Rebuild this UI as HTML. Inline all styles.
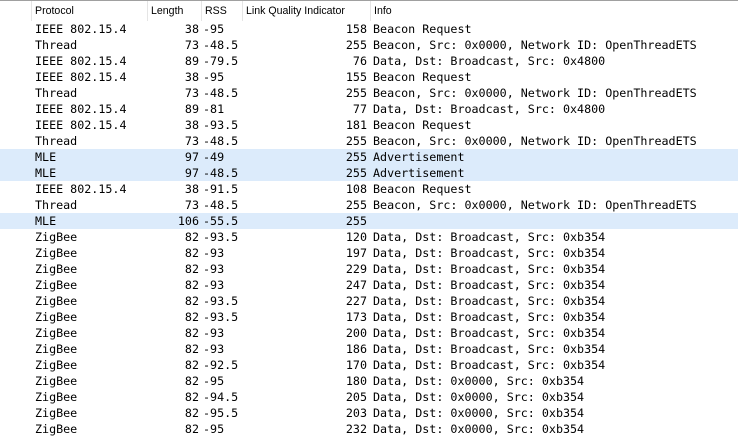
<!DOCTYPE html><html><head><style>
body{margin:0;width:738px;height:437px;overflow:hidden;background:#fff;position:relative}
.top{position:absolute;left:0;top:0;width:738px;height:1px;background:#a0a0a0}
.h{position:absolute;top:1px;height:19px;font:10.6px "Liberation Sans",sans-serif;color:#000;line-height:21px}
.sep{position:absolute;top:1px;height:20px;width:1px;background:#e5e5e5}
.r{position:absolute;left:0;width:738px;height:16px;font:11.7px "DejaVu Sans Mono","Liberation Mono",monospace;line-height:16px;color:#000;white-space:pre}
.r.s{background:#dcebfb}
.r span{position:absolute}
.p{left:35px}.l{right:539px;text-align:right}.rs{left:203px}.q{right:371px;text-align:right}.i{left:373px}
</style></head><body>
<div class="top"></div>
<div class="sep" style="left:31px"></div><div class="sep" style="left:147px"></div><div class="sep" style="left:201px"></div><div class="sep" style="left:242px"></div><div class="sep" style="left:370px"></div>
<div class="h" style="left:35px">Protocol</div><div class="h" style="left:151px">Length</div><div class="h" style="left:205px">RSS</div><div class="h" style="left:246px">Link Quality Indicator</div><div class="h" style="left:374px">Info</div>
<div id="rows"></div>
<script>
var d=[["IEEE 802.15.4",38,"-95",158,"Beacon Request"],["Thread",73,"-48.5",255,"Beacon, Src: 0x0000, Network ID: OpenThreadETS"],["IEEE 802.15.4",89,"-79.5",76,"Data, Dst: Broadcast, Src: 0x4800"],["IEEE 802.15.4",38,"-95",155,"Beacon Request"],["Thread",73,"-48.5",255,"Beacon, Src: 0x0000, Network ID: OpenThreadETS"],["IEEE 802.15.4",89,"-81",77,"Data, Dst: Broadcast, Src: 0x4800"],["IEEE 802.15.4",38,"-93.5",181,"Beacon Request"],["Thread",73,"-48.5",255,"Beacon, Src: 0x0000, Network ID: OpenThreadETS"],["MLE",97,"-49",255,"Advertisement",1],["MLE",97,"-48.5",255,"Advertisement",1],["IEEE 802.15.4",38,"-91.5",108,"Beacon Request"],["Thread",73,"-48.5",255,"Beacon, Src: 0x0000, Network ID: OpenThreadETS"],["MLE",106,"-55.5",255,"",1],["ZigBee",82,"-93.5",120,"Data, Dst: Broadcast, Src: 0xb354"],["ZigBee",82,"-93",197,"Data, Dst: Broadcast, Src: 0xb354"],["ZigBee",82,"-93",229,"Data, Dst: Broadcast, Src: 0xb354"],["ZigBee",82,"-93",247,"Data, Dst: Broadcast, Src: 0xb354"],["ZigBee",82,"-93.5",227,"Data, Dst: Broadcast, Src: 0xb354"],["ZigBee",82,"-93.5",173,"Data, Dst: Broadcast, Src: 0xb354"],["ZigBee",82,"-93",200,"Data, Dst: Broadcast, Src: 0xb354"],["ZigBee",82,"-93",186,"Data, Dst: Broadcast, Src: 0xb354"],["ZigBee",82,"-92.5",170,"Data, Dst: Broadcast, Src: 0xb354"],["ZigBee",82,"-95",180,"Data, Dst: 0x0000, Src: 0xb354"],["ZigBee",82,"-94.5",205,"Data, Dst: 0x0000, Src: 0xb354"],["ZigBee",82,"-95.5",203,"Data, Dst: 0x0000, Src: 0xb354"],["ZigBee",82,"-95",232,"Data, Dst: 0x0000, Src: 0xb354"]];
var h="";d.forEach(function(r,i){h+='<div class="r'+(r[5]?' s':'')+'" style="top:'+(21+i*16)+'px"><span class="p">'+r[0]+'</span><span class="l">'+r[1]+'</span><span class="rs">'+r[2]+'</span><span class="q">'+r[3]+'</span><span class="i">'+r[4]+'</span></div>'});
document.getElementById("rows").innerHTML=h;
</script>
</body></html>
